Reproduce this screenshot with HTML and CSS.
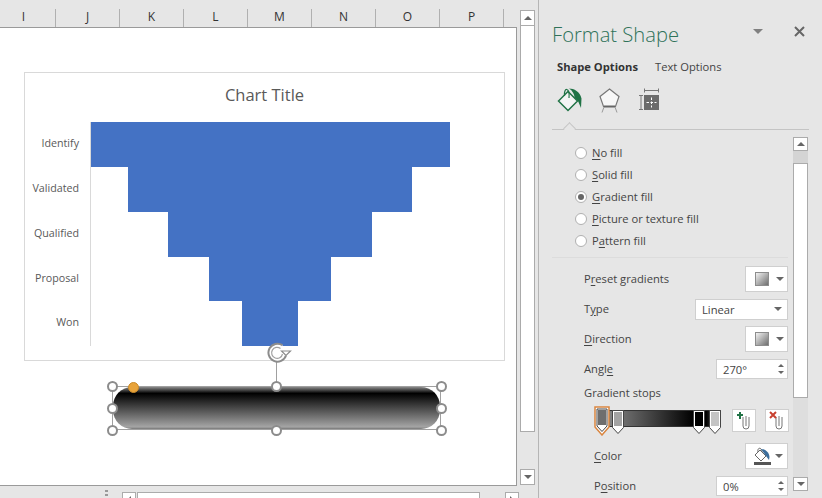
FILE: index.html
```html
<!DOCTYPE html>
<html lang="en">
<head>
    <meta charset="UTF-8">
    <meta name="viewport" content="width=device-width, initial-scale=1.0">
    <title>Format Shape</title>
    <link rel="stylesheet" href="styles.css">
</head>
<body>
    <div class="workbook">
        <div class="sheet-row">
            <div class="sheet-col">
                <div class="col-headers">
                    <div class="col-head">I</div>
                    <div class="col-head">J</div>
                    <div class="col-head">K</div>
                    <div class="col-head">L</div>
                    <div class="col-head">M</div>
                    <div class="col-head">N</div>
                    <div class="col-head">O</div>
                    <div class="col-head">P</div>
                </div>
                <div class="sheet">
                    <div class="chart">
                        <div class="chart-title">Chart Title</div>
                        <div class="funnel">
                            <div class="funnel-row"><span class="funnel-label">Identify</span><div class="funnel-plot"><div class="funnel-bar" style="width: 359px"></div></div></div>
                            <div class="funnel-row"><span class="funnel-label">Validated</span><div class="funnel-plot"><div class="funnel-bar" style="width: 284px"></div></div></div>
                            <div class="funnel-row"><span class="funnel-label">Qualified</span><div class="funnel-plot"><div class="funnel-bar" style="width: 204px"></div></div></div>
                            <div class="funnel-row short"><span class="funnel-label">Proposal</span><div class="funnel-plot"><div class="funnel-bar" style="width: 122px"></div></div></div>
                            <div class="funnel-row"><span class="funnel-label">Won</span><div class="funnel-plot"><div class="funnel-bar" style="width: 56px"></div></div></div>
                        </div>
                    </div>
                    <div class="selection">
                        <div class="pill"></div>
                        <div class="rotate-line"></div>
                        <svg class="rotate-handle" width="26" height="22" viewBox="0 0 26 22">
                            <path d="M15.500 3.200A9 9 0 1 0 19 13.500" fill="#fff" stroke="#8c8c8c" stroke-width="2"/>
                            <path d="M13.500 6.500A5.500 5.500 0 1 0 15.500 12" fill="#fff" stroke="#a0a0a0" stroke-width="1.200"/>
                            <path d="M14.500 9h9l-4.500 4.500z" fill="#fff" stroke="#8c8c8c" stroke-width="1.200"/>
                        </svg>
                        <span class="handle h-tl"></span>
                        <span class="handle h-tc"></span>
                        <span class="handle h-tr"></span>
                        <span class="handle h-ml"></span>
                        <span class="handle h-mr"></span>
                        <span class="handle h-bl"></span>
                        <span class="handle h-bc"></span>
                        <span class="handle h-br"></span>
                        <span class="adjust"></span>
                    </div>
                </div>
            </div>
            <div class="vscroll">
                <div class="sb-btn"><span class="tri-up"></span></div>
                <div class="vscroll-thumb"></div>
                <div class="vscroll-track"></div>
                <div class="sb-btn"><span class="caret"></span></div>
            </div>
        </div>
        <div class="hscroll">
            <div class="grip"></div>
            <div class="sb-btn hbtn"><span class="tri-left"></span></div>
            <div class="hscroll-thumb"></div>
            <div class="hscroll-track"></div>
            <div class="sb-btn hbtn"><span class="tri-right"></span></div>
        </div>
    </div>

    <div class="panel">
        <div class="panel-head">
            <h1 class="panel-title">Format Shape</h1>
            <span class="caret panel-caret"></span>
            <svg class="panel-close" width="11" height="11" viewBox="0 0 11 11"><path d="M1 1l9 9M10 1l-9 9" stroke="#666" stroke-width="2"/></svg>
        </div>
        <div class="tabs">
            <span class="tab active">Shape Options</span>
            <span class="tab">Text Options</span>
        </div>
        <div class="tab-icons">
            <svg width="25" height="26" viewBox="0 0 25 26">
                <path d="M1.500 14l9.500-9.500 9.500 9.500-9.500 9.500z" fill="#f4f4f4" stroke="#217346" stroke-width="1.500"/>
                <path d="M7.500 9c-1-9 5.500-9 4.500 2" fill="none" stroke="#217346" stroke-width="1.200"/>
                <path d="M12 1.500c5 0 11 3 12.500 10l-.500 9.500-3-7-3.500-3.500c0-3-2-7-5.500-9z" fill="#217346"/>
            </svg>
            <svg width="24" height="26" viewBox="0 0 24 26">
                <path d="M11.500 2l9.500 7.500-3.500 10h-12l-3.500-10z" fill="#f7f7f7" stroke="#777" stroke-width="1.200"/>
                <path d="M6 19.500h11" stroke="#666" stroke-width="2"/>
                <path d="M6 20l-2 5.500M17 20l2 5.500" stroke="#999" stroke-width="1"/>
            </svg>
            <svg width="24" height="26" viewBox="0 0 24 26">
                <path d="M6 3.500h15M6.500 1.500v4M20.500 1.500v4M1 8.500h4M1 22.500h4M3 8.500v14" fill="none" stroke="#777" stroke-width="1"/>
                <rect x="6" y="8" width="15" height="15" fill="#6b6b6b"/>
                <path d="M13.500 10.500v10M8.500 15.500h10" stroke="#fff" stroke-width="1" stroke-dasharray="2.500 1.500"/>
            </svg>
        </div>
        <div class="tab-rule"><span class="notch"></span></div>

        <div class="panel-body">
            <div class="options">
                <div class="fills">
                    <label class="radio"><span class="dot"></span><span class="lbl"><u>N</u>o fill</span></label>
                    <label class="radio"><span class="dot"></span><span class="lbl"><u>S</u>olid fill</span></label>
                    <label class="radio"><span class="dot checked"></span><span class="lbl"><u>G</u>radient fill</span></label>
                    <label class="radio"><span class="dot"></span><span class="lbl"><u>P</u>icture or texture fill</span></label>
                    <label class="radio"><span class="dot"></span><span class="lbl">P<u>a</u>ttern fill</span></label>
                </div>
                <div class="form-row">
                    <span class="lbl">P<u>r</u>eset gradients</span>
                    <div class="pick-btn"><span class="swatch"></span><span class="caret"></span></div>
                </div>
                <div class="form-row">
                    <span class="lbl">T<u>y</u>pe</span>
                    <div class="select"><span>Linear</span><span class="caret"></span></div>
                </div>
                <div class="form-row">
                    <span class="lbl"><u>D</u>irection</span>
                    <div class="pick-btn"><span class="swatch"></span><span class="caret"></span></div>
                </div>
                <div class="form-row">
                    <span class="lbl">Angl<u>e</u></span>
                    <div class="spinner"><span>270°</span><div class="spin-arrows"><span class="tri-up"></span><span class="caret"></span></div></div>
                </div>
                <div class="stops-label">Gradient stops</div>
                <div class="stops-row">
                    <div class="stops-bar">
                        <div class="stops-track"></div>
                        <svg class="stop stop-sel" width="16" height="30" viewBox="0 0 16 30">
                            <path d="M1 1h14v20l-7 8-7-8z" fill="#fff" stroke="#d9853f" stroke-width="1.500"/>
                            <path d="M3 3h10v17l-5 5.500-5-5.500z" fill="#fff" stroke="#444"/>
                            <rect x="4" y="4" width="8" height="15" fill="#6e6e6e"/>
                        </svg>
                        <svg class="stop stop-2" width="12" height="25" viewBox="0 0 12 25">
                            <path d="M.5 .5h11v17l-5.500 6-5.500-6z" fill="#fff" stroke="#444"/>
                            <rect x="2" y="2" width="8" height="14" fill="#a3a3a3"/>
                        </svg>
                        <svg class="stop stop-3" width="12" height="25" viewBox="0 0 12 25">
                            <path d="M.5 .5h11v17l-5.500 6-5.500-6z" fill="#fff" stroke="#444"/>
                            <rect x="2" y="2" width="8" height="14" fill="#000"/>
                        </svg>
                        <svg class="stop stop-4" width="12" height="25" viewBox="0 0 12 25">
                            <path d="M.5 .5h11v17l-5.500 6-5.500-6z" fill="#fff" stroke="#444"/>
                            <rect x="2" y="2" width="8" height="14" fill="#c4c4c4"/>
                        </svg>
                    </div>
                    <div class="stop-btn">
                        <svg width="16" height="19" viewBox="0 0 16 19">
                            <path d="M7 6v9a3 3 0 0 0 6 0V6M10 5v10" fill="none" stroke="#777" stroke-width="1"/>
                            <path d="M4 1v7M1 4h6" stroke="#217346" stroke-width="2"/>
                        </svg>
                    </div>
                    <div class="stop-btn">
                        <svg width="16" height="19" viewBox="0 0 16 19">
                            <path d="M7 6v9a3 3 0 0 0 6 0V6M10 5v10" fill="none" stroke="#777" stroke-width="1"/>
                            <path d="M1 1l6 6M7 1l-6 6" stroke="#c8402f" stroke-width="2"/>
                        </svg>
                    </div>
                </div>
                <div class="form-row sub">
                    <span class="lbl"><u>C</u>olor</span>
                    <div class="pick-btn">
                        <svg class="bucket" width="17" height="18" viewBox="0 0 17 18">
                            <path d="M1 8l5-5 6 6-5 5z" fill="#fff" stroke="#666" stroke-width="1"/>
                            <path d="M4 5c-1-5 4-5 4 0" fill="none" stroke="#666"/>
                            <path d="M7 2c4 0 8 3 8.500 8l-.500 3-3-4z" fill="#3c6e9c"/>
                            <rect x="0" y="15" width="17" height="3" fill="#555"/>
                        </svg>
                        <span class="caret"></span>
                    </div>
                </div>
                <div class="form-row sub">
                    <span class="lbl">P<u>o</u>sition</span>
                    <div class="spinner"><span>0%</span><div class="spin-arrows"><span class="tri-up"></span><span class="caret"></span></div></div>
                </div>
            </div>
            <div class="panel-scroll">
                <div class="sb-btn"><span class="tri-up"></span></div>
                <div class="panel-scroll-gap"></div>
                <div class="panel-scroll-thumb"></div>
                <div class="panel-scroll-track"></div>
                <div class="sb-btn"><span class="caret"></span></div>
            </div>
        </div>
    </div>
</body>
</html>
```

FILE: styles.css
```css
/* Page */
body {
    margin: 0;
    width: 822px;
    height: 498px;
    overflow: hidden;
    display: flex;
    background: #e6e6e6;
    color: #444;
    font-family: "Open Sans", "Noto Sans", sans-serif;
    font-size: 11.200px;
}

u {
    text-underline-offset: 2px;
}

/* Workbook side */
.workbook {
    width: 538px;
    height: 498px;
    flex: none;
    border-right: 1px solid #b5b5b5;
}

.sheet-row {
    display: flex;
    height: 486px;
}

.sheet-col {
    width: 517px;
    flex: none;
    display: flex;
    flex-direction: column;
}

.col-headers {
    height: 27px;
    flex: none;
    display: flex;
    margin-left: -8px;
    padding-top: 9px;
    box-sizing: border-box;
}

.col-head {
    width: 63px;
    height: 18px;
    flex: none;
    border-right: 1px solid #b0b0b0;
    text-align: center;
    font-size: 12px;
    line-height: 16px;
    color: #333;
}

.sheet {
    flex: 1;
    background: #fff;
    border-top: 1px solid #9a9a9a;
    border-right: 1px solid #9a9a9a;
    border-bottom: 1px solid #9a9a9a;
    padding: 44px 0 0 24px;
    box-sizing: border-box;
}

/* Chart */
.chart {
    width: 481px;
    height: 289px;
    box-sizing: border-box;
    border: 1px solid #d9d9d9;
}

.chart-title {
    height: 49px;
    text-align: center;
    font-size: 16.500px;
    line-height: 43px;
    color: #595959;
}

.funnel-row {
    height: 45px;
    display: flex;
    align-items: center;
}

.funnel-row.short {
    height: 44px;
}

.funnel-label {
    width: 54px;
    flex: none;
    padding-bottom: 4px;
    text-align: right;
    font-size: 10.700px;
    color: #595959;
}

.short .funnel-label {
    padding-bottom: 2px;
}

.funnel-plot {
    width: 358px;
    height: 100%;
    margin-left: 11px;
    border-left: 1px solid #d9d9d9;
    display: flex;
    justify-content: safe center;
}

.funnel-bar {
    height: 100%;
    flex: none;
    background: #4472c4;
}

/* Selected shape */
.selection {
    position: relative;
    width: 329px;
    height: 44px;
    margin: 25px 0 0 88px;
    box-sizing: border-box;
    border: 1px solid #a0a0a0;
}

.pill {
    height: 100%;
    border-radius: 19px;
    background: linear-gradient(to bottom, #8a8a8a 0, #000 15%, #9a9a9a 90%, #a5a5a5 95%, #777 100%);
}

.rotate-line {
    position: absolute;
    left: 163px;
    top: -26px;
    width: 1px;
    height: 26px;
    background: #a0a0a0;
}

.rotate-handle {
    position: absolute;
    left: 154px;
    top: -45px;
}

.handle {
    position: absolute;
    width: 11px;
    height: 11px;
    box-sizing: border-box;
    border: 2px solid #8c8c8c;
    border-radius: 50%;
    background: #fff;
}

.h-tl { left: -6px; top: -6px; }
.h-tc { left: 158px; top: -6px; }
.h-tr { left: 323px; top: -6px; }
.h-ml { left: -6px; top: 16px; }
.h-mr { left: 323px; top: 16px; }
.h-bl { left: -6px; top: 38px; }
.h-bc { left: 158px; top: 38px; }
.h-br { left: 323px; top: 38px; }

.adjust {
    position: absolute;
    left: 15px;
    top: -5px;
    width: 11px;
    height: 11px;
    box-sizing: border-box;
    border: 1px solid #c98a2a;
    border-radius: 50%;
    background: #e8a33a;
}

/* Scrollbars */
.sb-btn {
    width: 13px;
    height: 14px;
    flex: none;
    border: 1px solid #ababab;
    background: #fff;
    display: flex;
    align-items: center;
    justify-content: center;
}

.caret, .tri-up, .tri-left, .tri-right {
    display: block;
    width: 0;
    height: 0;
    flex: none;
}

.caret {
    border-left: 4px solid transparent;
    border-right: 4px solid transparent;
    border-top: 4px solid #666;
}

.tri-up {
    border-left: 4px solid transparent;
    border-right: 4px solid transparent;
    border-bottom: 4px solid #666;
}

.tri-left {
    border-top: 4px solid transparent;
    border-bottom: 4px solid transparent;
    border-right: 4px solid #666;
}

.tri-right {
    border-top: 4px solid transparent;
    border-bottom: 4px solid transparent;
    border-left: 4px solid #666;
}

.vscroll {
    width: 15px;
    margin: 10px 0 0 3px;
    height: 475px;
    display: flex;
    flex-direction: column;
}

.vscroll-thumb {
    height: 406px;
    flex: none;
    box-sizing: border-box;
    border: 1px solid #ababab;
    border-top: none;
    background: #fff;
}

.vscroll-track {
    flex: 1;
}

.hscroll {
    height: 12px;
    display: flex;
    align-items: flex-start;
}

.grip {
    width: 3px;
    height: 10px;
    margin: 4px 14px 0 105px;
    background: repeating-linear-gradient(to bottom, #999 0 2px, transparent 2px 4px);
    flex: none;
}

.hbtn {
    margin-top: 6px;
    width: 12px;
}

.hscroll-thumb {
    width: 343px;
    height: 12px;
    flex: none;
    margin: 6px 0 0 1px;
    box-sizing: border-box;
    border: 1px solid #ababab;
    background: #fff;
}

.hscroll-track {
    width: 25px;
    flex: none;
}

/* Format Shape panel */
.panel {
    flex: 1;
    min-width: 0;
    height: 498px;
    overflow: hidden;
    padding-left: 13px;
    box-sizing: border-box;
}

.panel-head {
    height: 52px;
    display: flex;
    align-items: flex-start;
    padding-top: 18px;
    box-sizing: border-box;
}

.panel-title {
    margin: 0;
    width: 201px;
    font-size: 20.200px;
    line-height: 32px;
    font-weight: 300;
    color: #2f7259;
}

.panel-caret {
    margin-top: 11px;
    border-left-width: 5px;
    border-right-width: 5px;
    border-top-width: 5px;
    border-top-color: #808080;
}

.panel-close {
    margin: 8px 0 0 31px;
}

.tabs {
    height: 30px;
    display: flex;
    padding-left: 5px;
    line-height: 30px;
}

.tab {
    width: 98px;
    flex: none;
}

.tab.active {
    font-weight: 700;
    color: #333;
}

.tab-icons {
    height: 26px;
    display: flex;
    gap: 16px;
    padding: 5px 0 0 5px;
}

.tab-rule {
    position: relative;
    width: 257px;
    height: 1px;
    margin-top: 16px;
    background: #c4c4c4;
}

.notch {
    position: absolute;
    left: 13px;
    top: -5px;
    width: 9px;
    height: 9px;
    box-sizing: border-box;
    border-top: 1px solid #c4c4c4;
    border-left: 1px solid #c4c4c4;
    background: #e6e6e6;
    transform: rotate(45deg);
}

.panel-body {
    display: flex;
    height: 368px;
}

.options {
    width: 241px;
    flex: none;
    box-sizing: border-box;
    padding-right: 5px;
}

.lbl {
    padding-bottom: 2px;
}

.fills {
    height: 128px;
    margin-bottom: 6px;
    padding: 12px 0 0 23px;
    box-sizing: border-box;
    border-bottom: 1px solid #dcdcdc;
}

.radio {
    height: 22px;
    display: flex;
    align-items: center;
    gap: 5px;
}

.dot {
    width: 12px;
    height: 12px;
    flex: none;
    box-sizing: border-box;
    border: 1px solid #b0b0b0;
    border-radius: 50%;
    background: #fff;
    display: flex;
    align-items: center;
    justify-content: center;
}

.dot.checked::after {
    content: "";
    width: 6px;
    height: 6px;
    border-radius: 50%;
    background: #666;
}

.form-row {
    height: 30px;
    display: flex;
    align-items: center;
    justify-content: space-between;
    padding-left: 32px;
}

.form-row.sub {
    padding-left: 42px;
}

.pick-btn {
    width: 43px;
    height: 26px;
    flex: none;
    box-sizing: border-box;
    border: 1px solid #cfcfcf;
    background: #fff;
    padding-left: 9px;
    display: flex;
    align-items: center;
    gap: 7px;
}

.swatch {
    width: 14px;
    height: 14px;
    box-sizing: border-box;
    border: 1px solid #8c8c8c;
    background: linear-gradient(135deg, #f2f2f2, #6e6e6e);
}

.bucket {
    margin-left: -1px;
    margin-right: -3px;
}

.select {
    width: 93px;
    height: 21px;
    flex: none;
    box-sizing: border-box;
    border: 1px solid #cfcfcf;
    background: #fff;
    padding: 0 5px 0 6px;
    display: flex;
    align-items: center;
    justify-content: space-between;
}

.spinner {
    width: 72px;
    height: 20px;
    flex: none;
    box-sizing: border-box;
    border: 1px solid #cfcfcf;
    background: #fff;
    padding: 0 3px 0 6px;
    display: flex;
    align-items: center;
    justify-content: space-between;
}

.spin-arrows {
    display: flex;
    flex-direction: column;
    gap: 4px;
}

.spin-arrows .caret {
    border-left-width: 3px;
    border-right-width: 3px;
    border-top-width: 3px;
}

.spin-arrows .tri-up {
    border-left-width: 3px;
    border-right-width: 3px;
    border-bottom-width: 3px;
}

.stops-label {
    height: 20px;
    line-height: 17px;
    padding-left: 32px;
}

.stops-row {
    height: 37px;
    display: flex;
    align-items: flex-start;
    padding-top: 3px;
    box-sizing: border-box;
}

.stops-bar {
    position: relative;
    width: 127px;
    height: 30px;
    margin-left: 42px;
    flex: none;
}

.stops-track {
    position: absolute;
    left: 10px;
    right: 0;
    top: 3px;
    height: 17px;
    box-sizing: border-box;
    border: 1px solid #333;
    background: linear-gradient(to right, #8a8a8a 0, #000 77%, #000 88%, #777 100%);
}

.stop {
    position: absolute;
    top: 3px;
}

.stop-sel {
    left: 0;
    top: -1px;
}

.stop-2 { left: 18px; }
.stop-3 { left: 99px; }
.stop-4 { left: 115px; }

.stop-btn {
    width: 24px;
    height: 23px;
    flex: none;
    box-sizing: border-box;
    border: 1px solid #cfcfcf;
    background: #fff;
    margin: 2px 0 0 9px;
    display: flex;
    align-items: center;
    justify-content: center;
}

.stops-bar + .stop-btn {
    margin-left: 11px;
}

.panel-scroll {
    width: 15px;
    height: 354px;
    margin: 7px 0 0 0;
    display: flex;
    flex-direction: column;
}

.panel-scroll .sb-btn {
    height: 12px;
}

.panel-scroll-gap {
    height: 12px;
    flex: none;
    background: #d4d4d4;
}

.panel-scroll-thumb {
    height: 235px;
    flex: none;
    box-sizing: border-box;
    border: 1px solid #ababab;
    background: #fff;
}

.panel-scroll-track {
    flex: 1;
    background: #dedede;
}
```
